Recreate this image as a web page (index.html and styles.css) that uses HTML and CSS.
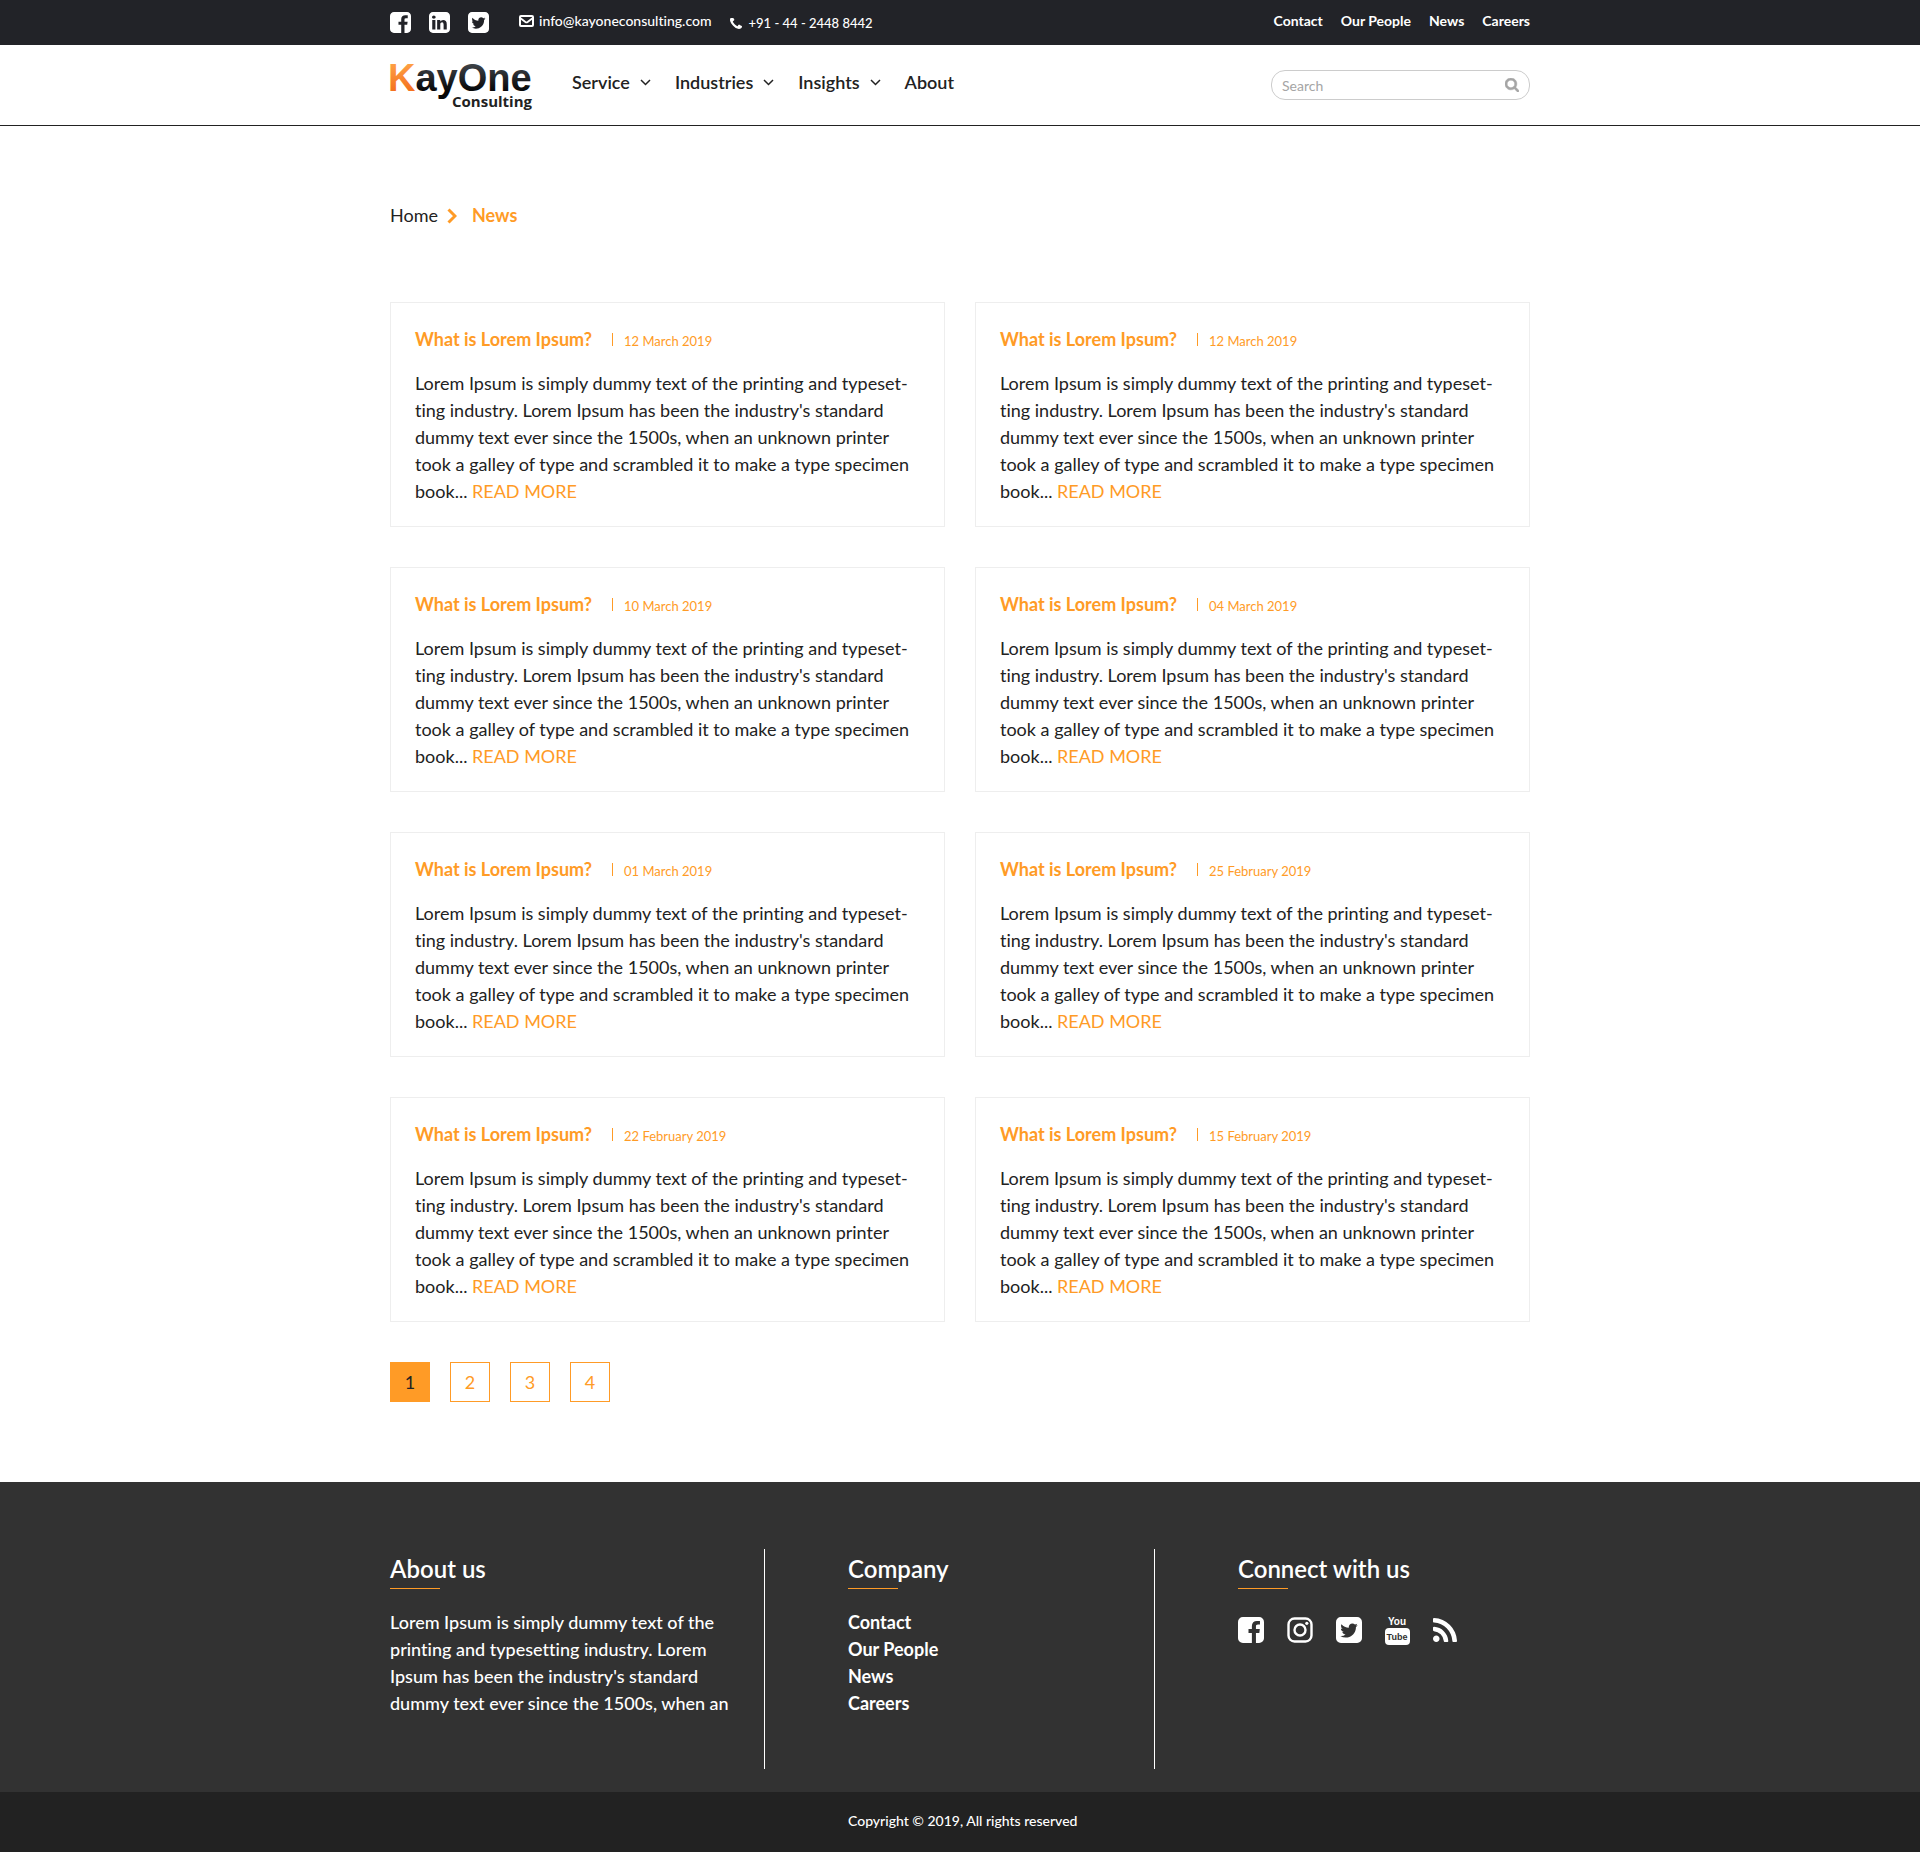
FILE: index.html
```
<!DOCTYPE html>
<html lang="en">
<head>
<meta charset="utf-8">
<meta name="viewport" content="width=device-width, initial-scale=1">
<title>News | KayOne Consulting</title>
<link rel="stylesheet" href="styles.css">
</head>
<body>
<svg class="sprite" aria-hidden="true">
  <symbol id="i-facebook" viewBox="128 128 1536 1536"><path d="M1376 128q119 0 203.500 84.500t84.500 203.500v960q0 119-84.500 203.500t-203.500 84.500h-188v-595h199l30-232h-229v-148q0-56 23.500-84t91.500-28l122-1v-207q-63-9-178-9-136 0-217.500 80t-81.500 226v171h-200v232h200v595h-532q-119 0-203.500-84.500t-84.500-203.500v-960q0-119 84.500-203.500t203.500-84.500h960z"/></symbol>
  <symbol id="i-linkedin" viewBox="128 128 1536 1536"><path d="M365 1414h231v-694h-231v694zm246-908q-1-52-36-86t-93-34-94.500 34-36.500 86q0 51 35.500 85.500t92.500 34.500h1q59 0 95-34.500t36-85.500zm585 908h231v-398q0-154-73-233t-193-79q-136 0-209 117h2v-101h-231q3 66 0 694h231v-388q0-38 7-56 15-35 45-59.500t74-24.500q116 0 116 157v371zm468-998v960q0 119-84.500 203.500t-203.500 84.500h-960q-119 0-203.500-84.500t-84.500-203.500v-960q0-119 84.500-203.500t203.500-84.500h960q119 0 203.500 84.500t84.500 203.500z"/></symbol>
  <symbol id="i-twitter" viewBox="128 128 1536 1536"><path d="M1408 610q-56 25-121 34 68-40 93-117-65 38-134 51-61-66-153-66-87 0-148.500 61.500t-61.500 148.500q0 29 5 48-129-7-242-65t-192-155q-29 50-29 106 0 114 91 175-47-1-100-26v2q0 75 50 133.500t123 72.500q-29 8-51 8-13 0-39-4 21 63 74.500 104t121.500 42q-116 90-261 90-26 0-50-3 148 94 322 94 112 0 210-35.500t168-95 120.500-137 75-162 24.500-168.500q0-18-1-27 63-45 105-109zm256-194v960q0 119-84.500 203.500t-203.500 84.500h-960q-119 0-203.500-84.500t-84.500-203.500v-960q0-119 84.500-203.500t203.500-84.500h960q119 0 203.500 84.500t84.500 203.500z"/></symbol>
  <symbol id="i-instagram" viewBox="0 0 26 26"><rect x="1.500" y="1.500" width="23" height="23" rx="6" fill="none" stroke="currentColor" stroke-width="2.400"/><circle cx="13" cy="13" r="5.500" fill="none" stroke="currentColor" stroke-width="2.400"/><circle cx="19.800" cy="6.300" r="1.600"/></symbol>
  <symbol id="i-rss" viewBox="192 128 1408 1408"><path d="M576 1344q0 80-56 136t-136 56-136-56-56-136 56-136 136-56 136 56 56 136zm512 123q2 28-17 48-18 21-47 21h-135q-25 0-43-16.500t-20-41.500q-22-229-184.500-391.500t-391.500-184.500q-25-2-41.500-20t-16.500-43v-135q0-29 21-47 17-17 43-17h5q160 13 306 80.500t259 181.500q114 113 181.500 259t80.500 306zm512 2q2 27-18 47-18 20-46 20h-143q-26 0-44.500-17.500t-19.500-42.500q-12-215-101-408.500t-231.500-336-336-231.500-408.500-102q-25-1-42.500-19.500t-17.500-43.500v-143q0-28 20-46 18-18 44-18h3q262 13 501.500 120t425.500 294q187 186 294 425.500t120 501.500z"/></symbol>
  <symbol id="i-phone" viewBox="192 256 1408 1280"><path d="M1600 1240q0 27-10 70.500t-21 68.500q-21 50-122 106-94 51-186 51-27 0-53-3.500t-57.500-12.500-47-14.500-55.500-20.500-49-18q-98-35-175-83-127-79-264-216t-216-264q-48-77-83-175-3-9-18-49t-20.500-55.500-14.500-47-12.500-57.500-3.500-53q0-92 51-186 56-101 106-122 25-11 68.500-21t70.500-10q14 0 21 3 18 6 53 76 11 19 30 54t35 63.500 31 53.500q3 4 17.500 25t21.500 35.500 7 28.500q0 20-28.500 50t-62 55-62 53-28.500 46q0 9 5 22.500t8.500 20.500 14 24 11.500 19q76 137 174 235t235 174q2 1 19 11.500t24 14 20.500 8.500 22.500 5q18 0 46-28.500t53-62 55-62 50-28.500q14 0 28.500 7t35.500 21.500 25 17.500q25 15 53.500 31t63.500 35 54 30q70 35 76 53 3 7 3 21z"/></symbol>
  <symbol id="i-search" viewBox="64 128 1664 1664"><path stroke="currentColor" stroke-width="60" d="M1216 832q0-185-131.500-316.500t-316.500-131.500-316.500 131.500-131.500 316.500 131.500 316.500 316.500 131.500 316.500-131.500 131.500-316.500zm512 832q0 52-38 90t-90 38q-54 0-90-38l-343-342q-179 124-399 124-143 0-273.500-55.500t-225-150-150-225-55.500-273.500 55.500-273.500 150-225 225-150 273.500-55.500 273.500 55.500 225 150 150 225 55.500 273.500q0 220-124 399l343 343q37 37 37 90z"/></symbol>
  <symbol id="i-mail" viewBox="0 0 15 12"><rect x="1" y="1" width="13" height="10" rx="1" fill="none" stroke="currentColor" stroke-width="2"/><path d="M1.500 3.200L6.400 7q1.100.8 2.200 0l4.900-3.800" fill="none" stroke="currentColor" stroke-width="1.800"/></symbol>
  <symbol id="i-down" viewBox="0 0 11 7"><path d="M1 1l4.500 4.500L10 1" fill="none" stroke="currentColor" stroke-width="1.500"/></symbol>
</svg>

<div class="topbar">
  <div class="container topbar-row">
    <div class="social">
      <a href="#" aria-label="Facebook"><svg><use href="#i-facebook"/></svg></a>
      <a href="#" aria-label="LinkedIn"><svg><use href="#i-linkedin"/></svg></a>
      <a href="#" aria-label="Twitter"><svg><use href="#i-twitter"/></svg></a>
    </div>
    <a class="email" href="mailto:info@kayoneconsulting.com"><svg><use href="#i-mail"/></svg>info@kayoneconsulting.com</a>
    <a class="phone" href="tel:+914424488442"><svg><use href="#i-phone"/></svg>+91 - 44 - 2448 8442</a>
    <nav class="toplinks" aria-label="Quick links">
      <a href="#">Contact</a><a href="#">Our People</a><a href="#">News</a><a href="#">Careers</a>
    </nav>
  </div>
</div>

<header class="header">
  <div class="container header-row">
    <a class="logo" href="#" aria-label="KayOne Consulting">
      <svg viewBox="0 0 144 60">
        <defs>
          <linearGradient id="g-orange" gradientUnits="userSpaceOnUse" x1="0" y1="6" x2="0" y2="36"><stop offset="0" stop-color="#ffa548"/><stop offset="1" stop-color="#f4711f"/></linearGradient>
          <linearGradient id="g-dark" gradientUnits="userSpaceOnUse" x1="0" y1="6" x2="0" y2="36"><stop offset="0" stop-color="#454a50"/><stop offset="1" stop-color="#060708"/></linearGradient>
        </defs>
        <text class="logo-name" x="-2" y="36"><tspan fill="url(#g-orange)">K</tspan><tspan fill="url(#g-dark)">ayOne</tspan></text>
        <text class="logo-sub" x="142" y="52" text-anchor="end">Consulting</text>
      </svg>
    </a>
    <nav class="mainnav" aria-label="Main">
      <a href="#">Service<svg><use href="#i-down"/></svg></a>
      <a href="#">Industries<svg><use href="#i-down"/></svg></a>
      <a href="#">Insights<svg><use href="#i-down"/></svg></a>
      <a href="#">About</a>
    </nav>
    <form class="search">
      <input type="search" placeholder="Search" aria-label="Search">
      <button type="submit" aria-label="Submit search"><svg><use href="#i-search"/></svg></button>
    </form>
  </div>
</header>

<main class="container main">
  <nav class="breadcrumb" aria-label="Breadcrumb">
    <a href="#">Home</a>
    <svg viewBox="0 0 10 16"><path d="M1.500 1.500L8 8l-6.500 6.500" fill="none" stroke="currentColor" stroke-width="3"/></svg>
    <span class="current">News</span>
  </nav>

  <section class="cards">
    <article class="card">
      <header><h2>What is Lorem Ipsum?</h2><time>12 March 2019</time></header>
      <p>Lorem Ipsum is simply dummy text of the printing and typeset&shy;ting industry. Lorem Ipsum has been the industry's standard dummy text ever since the 1500s, when an unknown printer took a galley of type and scrambled it to make a type specimen book... <a href="#">READ MORE</a></p>
    </article>
    <article class="card">
      <header><h2>What is Lorem Ipsum?</h2><time>12 March 2019</time></header>
      <p>Lorem Ipsum is simply dummy text of the printing and typeset&shy;ting industry. Lorem Ipsum has been the industry's standard dummy text ever since the 1500s, when an unknown printer took a galley of type and scrambled it to make a type specimen book... <a href="#">READ MORE</a></p>
    </article>
    <article class="card">
      <header><h2>What is Lorem Ipsum?</h2><time>10 March 2019</time></header>
      <p>Lorem Ipsum is simply dummy text of the printing and typeset&shy;ting industry. Lorem Ipsum has been the industry's standard dummy text ever since the 1500s, when an unknown printer took a galley of type and scrambled it to make a type specimen book... <a href="#">READ MORE</a></p>
    </article>
    <article class="card">
      <header><h2>What is Lorem Ipsum?</h2><time>04 March 2019</time></header>
      <p>Lorem Ipsum is simply dummy text of the printing and typeset&shy;ting industry. Lorem Ipsum has been the industry's standard dummy text ever since the 1500s, when an unknown printer took a galley of type and scrambled it to make a type specimen book... <a href="#">READ MORE</a></p>
    </article>
    <article class="card">
      <header><h2>What is Lorem Ipsum?</h2><time>01 March 2019</time></header>
      <p>Lorem Ipsum is simply dummy text of the printing and typeset&shy;ting industry. Lorem Ipsum has been the industry's standard dummy text ever since the 1500s, when an unknown printer took a galley of type and scrambled it to make a type specimen book... <a href="#">READ MORE</a></p>
    </article>
    <article class="card">
      <header><h2>What is Lorem Ipsum?</h2><time>25 February 2019</time></header>
      <p>Lorem Ipsum is simply dummy text of the printing and typeset&shy;ting industry. Lorem Ipsum has been the industry's standard dummy text ever since the 1500s, when an unknown printer took a galley of type and scrambled it to make a type specimen book... <a href="#">READ MORE</a></p>
    </article>
    <article class="card">
      <header><h2>What is Lorem Ipsum?</h2><time>22 February 2019</time></header>
      <p>Lorem Ipsum is simply dummy text of the printing and typeset&shy;ting industry. Lorem Ipsum has been the industry's standard dummy text ever since the 1500s, when an unknown printer took a galley of type and scrambled it to make a type specimen book... <a href="#">READ MORE</a></p>
    </article>
    <article class="card">
      <header><h2>What is Lorem Ipsum?</h2><time>15 February 2019</time></header>
      <p>Lorem Ipsum is simply dummy text of the printing and typeset&shy;ting industry. Lorem Ipsum has been the industry's standard dummy text ever since the 1500s, when an unknown printer took a galley of type and scrambled it to make a type specimen book... <a href="#">READ MORE</a></p>
    </article>
  </section>

  <nav class="pages" aria-label="Pages">
    <a class="active" href="#" aria-current="page">1</a><a href="#">2</a><a href="#">3</a><a href="#">4</a>
  </nav>
</main>

<footer class="footer">
  <div class="container footer-row">
    <section class="footer-col">
      <h3>About us</h3>
      <p>Lorem Ipsum is simply dummy text of the printing and typesetting industry. Lorem Ipsum has been the industry's standard dummy text ever since the 1500s, when an</p>
    </section>
    <section class="footer-col">
      <h3>Company</h3>
      <ul>
        <li><a href="#">Contact</a></li>
        <li><a href="#">Our People</a></li>
        <li><a href="#">News</a></li>
        <li><a href="#">Careers</a></li>
      </ul>
    </section>
    <section class="footer-col">
      <h3>Connect with us</h3>
      <div class="connect">
        <a href="#" aria-label="Facebook"><svg><use href="#i-facebook"/></svg></a>
        <a href="#" aria-label="Instagram"><svg><use href="#i-instagram"/></svg></a>
        <a href="#" aria-label="Twitter"><svg><use href="#i-twitter"/></svg></a>
        <a href="#" aria-label="YouTube"><svg class="youtube" viewBox="0 0 25 32"><text x="12" y="11" text-anchor="middle">You</text><rect x="0" y="14" width="25" height="17" rx="4"/><text class="tube" x="12" y="26" text-anchor="middle">Tube</text></svg></a>
        <a href="#" aria-label="RSS"><svg class="rss"><use href="#i-rss"/></svg></a>
      </div>
    </section>
  </div>
  <div class="copyright">
    <div class="container"><p>Copyright © 2019, All rights reserved</p></div>
  </div>
</footer>
</body>
</html>
```
FILE: styles.css
```
* { box-sizing: border-box; }
body {
  margin: 0;
  font: 18px/27px Lato, "Liberation Sans", sans-serif;
  font-variant-ligatures: none;
  color: #222;
  background: #fff;
}
h2, h3, p, ul { margin: 0; padding: 0; }
ul { list-style: none; }
a { color: inherit; text-decoration: none; }
svg { display: block; fill: currentColor; }
.sprite { display: none; }
.container { max-width: 1140px; margin: 0 auto; }

/* Top bar */
.topbar { background: #222328; color: #fff; }
.topbar-row { display: flex; align-items: center; height: 45px; font-size: 14px; font-weight: 500; line-height: 21px; }
.social { display: flex; gap: 18px; }
.social svg { width: 21px; height: 21px; }
.email, .phone { display: flex; align-items: center; }
.email { gap: 5px; margin-left: 30px; padding-bottom: 4px; }
.email svg { width: 15px; height: 12px; }
.phone { gap: 7px; margin-left: 18px; padding-top: 1px; font-size: 13px; }
.phone svg { width: 12px; height: 11px; }
.toplinks { display: flex; gap: 18px; margin-left: auto; padding-bottom: 4px; font-weight: 700; }

/* Header */
.header { border-bottom: 1px solid #222; }
.header-row { display: flex; align-items: center; height: 80px; }
.logo svg { width: 144px; height: 60px; overflow: visible; }
.logo-name { font: 700 38px "Liberation Sans", sans-serif; }
.logo-sub { font: 700 15px "Open Sans", sans-serif; fill: #222; }
.mainnav { display: flex; gap: 24px; margin-left: 38px; padding-bottom: 5px; font-weight: 600; }
.mainnav a { display: flex; align-items: center; gap: 10px; }
.mainnav svg { width: 11px; height: 7px; }
.search {
  display: flex;
  align-items: center;
  width: 259px;
  height: 30px;
  margin-left: auto;
  padding: 0 10px;
  border: 1px solid #ccc;
  border-radius: 14px;
}
.search input {
  flex: 1;
  min-width: 0;
  padding: 0;
  border: 0;
  outline: 0;
  background: none;
  font: 14px/21px Lato, sans-serif;
  color: #222;
}
.search input::placeholder { color: #a5a5a5; opacity: 1; }
.search button { padding: 0; border: 0; background: none; color: #a5a5a5; cursor: pointer; }
.search svg { width: 14px; height: 14px; }

/* News list */
.main { padding: 76px 0 80px; }
.breadcrumb { display: flex; align-items: center; }
.breadcrumb svg { width: 10px; height: 16px; margin: 0 15px 0 9px; color: #ff9b26; }
.breadcrumb .current { color: #ff9b26; font-weight: 700; }
.cards { display: grid; grid-template-columns: 1fr 1fr; gap: 40px 30px; margin: 73px 0 40px; }
.card { padding: 23px 28px 21px 24px; border: 1px solid #eee; }
.card header { display: flex; align-items: baseline; margin-bottom: 15px; color: #ff9b26; }
.card h2 { font-size: 18px; font-weight: 700; line-height: 27px; }
.card time { font-size: 13px; }
.card time::before {
  content: "";
  display: inline-block;
  width: 1px;
  height: 13px;
  margin: 0 11px 0 20px;
  background: #ff9b26;
}
.card p a { color: #ff9b26; }
.pages { display: flex; gap: 20px; }
.pages a {
  width: 40px;
  height: 40px;
  border: 1px solid #ff9b26;
  color: #ff9b26;
  line-height: 38px;
  text-align: center;
}
.pages .active { background: #ff9b26; color: #222; }

/* Footer */
.footer { background: #323232; color: #fff; }
.footer-row { display: grid; grid-template-columns: 375fr 390fr 375fr; padding: 67px 0 23px; }
.footer-col { min-height: 220px; padding: 5px 30px 0 83px; border-right: 1px solid #fff; }
.footer-col:first-child { padding-left: 0; }
.footer-col:last-child { padding-right: 0; border-right: 0; }
.footer h3 { font-size: 24px; font-weight: 600; line-height: 30px; }
.footer h3::after { content: ""; display: block; width: 50px; height: 1px; margin: 4px 0 20px; background: #ff9b26; }
.footer-col p { font-weight: 500; }
.footer-col li { font-weight: 700; }
.connect { display: flex; align-items: center; gap: 23px; padding-top: 5px; }
.connect svg { width: 26px; height: 26px; }
.connect .rss { width: 24px; height: 24px; }
.connect .youtube { width: 25px; height: 32px; }
.youtube text { font: 700 10px "Liberation Sans", sans-serif; }
.youtube .tube { font-size: 9px; fill: #323232; }
.copyright { background: #222; }
.copyright p { padding: 18px 0 21px 458px; font-size: 14px; font-weight: 500; line-height: 21px; }
```
